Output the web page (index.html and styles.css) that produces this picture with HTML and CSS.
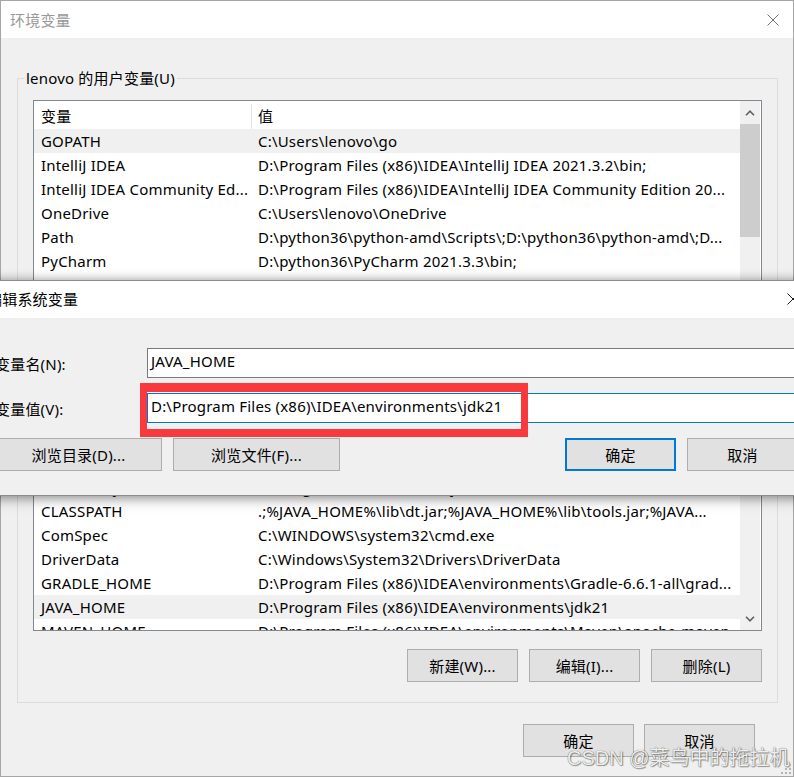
FILE: index.html
```html
<!DOCTYPE html>
<html lang="zh-CN">
<head>
    <meta charset="UTF-8">
    <meta name="viewport" content="width=device-width, initial-scale=1.0">
    <title>环境变量</title>
    <link rel="stylesheet" href="styles.css">
</head>
<body>
    <div class="window">
        <div class="titlebar">
            <span class="title">环境变量</span>
            <svg class="close" width="12" height="12" viewBox="0 0 12 12">
                <path d="M0.5 0.5L11.5 11.5M11.5 0.5L0.5 11.5" stroke="#707070" stroke-width="1" fill="none"/>
            </svg>
        </div>

        <div class="content">
            <div class="group group-user">
                <div class="legend">lenovo 的用户变量(U)</div>
                <div class="listview list-user">
                    <div class="list-main">
                        <div class="list-head">
                            <div class="cell name">变量</div>
                            <div class="cell value">值</div>
                        </div>
                        <div class="row selected">
                            <div class="cell name">GOPATH</div>
                            <div class="cell value">C:\Users\lenovo\go</div>
                        </div>
                        <div class="row">
                            <div class="cell name">IntelliJ IDEA</div>
                            <div class="cell value">D:\Program Files (x86)\IDEA\IntelliJ IDEA 2021.3.2\bin;</div>
                        </div>
                        <div class="row">
                            <div class="cell name">IntelliJ IDEA Community Ed...</div>
                            <div class="cell value">D:\Program Files (x86)\IDEA\IntelliJ IDEA Community Edition 20...</div>
                        </div>
                        <div class="row">
                            <div class="cell name">OneDrive</div>
                            <div class="cell value">C:\Users\lenovo\OneDrive</div>
                        </div>
                        <div class="row">
                            <div class="cell name">Path</div>
                            <div class="cell value">D:\python36\python-amd\Scripts\;D:\python36\python-amd\;D...</div>
                        </div>
                        <div class="row">
                            <div class="cell name">PyCharm</div>
                            <div class="cell value">D:\python36\PyCharm 2021.3.3\bin;</div>
                        </div>
                        <div class="row">
                            <div class="cell name">PyCharm Community Edition</div>
                            <div class="cell value">D:\python36\PyCharm Community Edition 2019.3\bin;</div>
                        </div>
                        <div class="row">
                            <div class="cell name">TEMP</div>
                            <div class="cell value">C:\Users\lenovo\AppData\Local\Temp</div>
                        </div>
                    </div>
                    <div class="scrollbar">
                        <div class="arrow">
                            <svg width="10" height="6" viewBox="0 0 10 6"><path d="M1 5.2L5 1.2L9 5.2" stroke="#606060" stroke-width="1.6" fill="none"/></svg>
                        </div>
                        <div class="thumb"></div>
                    </div>
                </div>
                <div class="group-buttons">
                    <button class="btn">新建(N)...</button>
                    <button class="btn">编辑(E)...</button>
                    <button class="btn">删除(D)</button>
                </div>
            </div>

            <div class="group group-system">
                <div class="legend">系统变量(S)</div>
                <div class="listview list-system">
                    <div class="list-main">
                        <div class="list-head">
                            <div class="cell name">变量</div>
                            <div class="cell value">值</div>
                        </div>
                        <div class="row">
                            <div class="cell name">ANDROID_HOME</div>
                            <div class="cell value">D:\Android\sdk</div>
                        </div>
                        <div class="row">
                            <div class="cell name">ChocolateyInstall</div>
                            <div class="cell value">C:\ProgramData\chocolatey</div>
                        </div>
                        <div class="row">
                            <div class="cell name">CLASSPATH</div>
                            <div class="cell value">.;%JAVA_HOME%\lib\dt.jar;%JAVA_HOME%\lib\tools.jar;%JAVA...</div>
                        </div>
                        <div class="row">
                            <div class="cell name">ComSpec</div>
                            <div class="cell value">C:\WINDOWS\system32\cmd.exe</div>
                        </div>
                        <div class="row">
                            <div class="cell name">DriverData</div>
                            <div class="cell value">C:\Windows\System32\Drivers\DriverData</div>
                        </div>
                        <div class="row">
                            <div class="cell name">GRADLE_HOME</div>
                            <div class="cell value">D:\Program Files (x86)\IDEA\environments\Gradle-6.6.1-all\grad...</div>
                        </div>
                        <div class="row selected">
                            <div class="cell name">JAVA_HOME</div>
                            <div class="cell value">D:\Program Files (x86)\IDEA\environments\jdk21</div>
                        </div>
                        <div class="row">
                            <div class="cell name">MAVEN_HOME</div>
                            <div class="cell value">D:\Program Files (x86)\IDEA\environments\Maven\apache-maven</div>
                        </div>
                    </div>
                    <div class="scrollbar">
                        <div class="track"></div>
                        <div class="arrow">
                            <svg width="10" height="6" viewBox="0 0 10 6"><path d="M1 0.8L5 4.8L9 0.8" stroke="#606060" stroke-width="1.6" fill="none"/></svg>
                        </div>
                    </div>
                </div>
                <div class="group-buttons">
                    <button class="btn">新建(W)...</button>
                    <button class="btn">编辑(I)...</button>
                    <button class="btn">删除(L)</button>
                </div>
            </div>

            <div class="footer">
                <button class="btn">确定</button>
                <button class="btn">取消</button>
            </div>
        </div>

        <div class="watermark">CSDN @菜鸟中的拖拉机</div>
        <svg class="grip" width="10" height="10" viewBox="0 0 10 10">
            <rect x="8" y="0" width="2" height="2" fill="#b4b4b4"/>
            <rect x="4" y="4" width="2" height="2" fill="#b4b4b4"/>
            <rect x="8" y="4" width="2" height="2" fill="#b4b4b4"/>
            <rect x="0" y="8" width="2" height="2" fill="#b4b4b4"/>
            <rect x="4" y="8" width="2" height="2" fill="#b4b4b4"/>
            <rect x="8" y="8" width="2" height="2" fill="#b4b4b4"/>
        </svg>
    </div>

    <div class="dialog">
        <div class="dlg-titlebar">
            <span class="dlg-title">编辑系统变量</span>
            <svg class="dlg-close" width="12" height="12" viewBox="0 0 12 12">
                <path d="M0.5 0.5L11.5 11.5M11.5 0.5L0.5 11.5" stroke="#1a1a1a" stroke-width="1" fill="none"/>
            </svg>
        </div>
        <div class="dlg-body">
            <div class="field">
                <label class="field-label">变量名(N):</label>
                <div class="input">JAVA_HOME</div>
            </div>
            <div class="field">
                <label class="field-label">变量值(V):</label>
                <div class="input focused">D:\Program Files (x86)\IDEA\environments\jdk21</div>
            </div>
            <div class="dlg-buttons">
                <button class="btn wide">浏览目录(D)...</button>
                <button class="btn wide">浏览文件(F)...</button>
                <span class="spacer"></span>
                <button class="btn default">确定</button>
                <button class="btn">取消</button>
            </div>
        </div>
        <div class="mark"></div>
    </div>
</body>
</html>
```

FILE: styles.css
```css
* {
    margin: 0;
    padding: 0;
    box-sizing: border-box;
}

body {
    width: 794px;
    height: 777px;
    overflow: hidden;
    position: relative;
    font-family: "Noto Sans", "Noto Sans CJK SC", sans-serif;
    font-size: 15px;
    letter-spacing: 0.2px;
    color: #000;
    background: #f0f0f0;
}

.window {
    position: relative;
    width: 794px;
    height: 777px;
    border: 1px solid #a6a6a6;
    background: #f0f0f0;
}

.titlebar {
    height: 37px;
    background: #fff;
    display: flex;
    align-items: center;
    justify-content: space-between;
    padding: 0 14px 0 9px;
}

.title {
    color: #999;
}

.content {
    padding: 0 15px 0 16px;
}

.group {
    position: relative;
    border: 1px solid #dcdcdc;
    padding: 21px 15px 20px;
}

.group-user {
    margin-top: 40px;
}

.group-system {
    margin-top: 28px;
}

.legend {
    position: absolute;
    top: -11px;
    left: 6px;
    padding: 0 2px;
    line-height: 20px;
    background: #f0f0f0;
    white-space: nowrap;
}

.listview {
    display: flex;
    background: #fff;
    border: 1px solid #828790;
    padding-right: 1px;
}

.list-user {
    height: 200px;
}

.list-system {
    height: 209px;
}

.list-main {
    flex: 1;
    overflow: hidden;
}

.list-head {
    display: flex;
    height: 28px;
    padding-top: 3px;
    line-height: 25px;
}

.list-head .name {
    border-right: 1px solid #e5e5e5;
}

.row {
    display: flex;
    height: 24px;
    line-height: 24px;
}

.row.selected {
    background: #f0f0f0;
}

.cell {
    white-space: nowrap;
    overflow: hidden;
}

.cell.name {
    width: 218px;
    flex-shrink: 0;
    padding-left: 7px;
}

.cell.value {
    flex: 1;
    padding-left: 6px;
}

.scrollbar {
    width: 20px;
    display: flex;
    flex-direction: column;
    background: #f0f0f0;
}

.scrollbar .arrow {
    height: 23px;
    flex-shrink: 0;
    display: flex;
    align-items: center;
    justify-content: center;
}

.scrollbar .thumb {
    height: 113px;
    background: #cdcdcd;
}

.scrollbar .track {
    flex: 1;
}

.group-buttons {
    display: flex;
    justify-content: flex-end;
    gap: 11px;
    margin-top: 18px;
}

.btn {
    width: 111px;
    height: 33px;
    border: 1px solid #adadad;
    background: #e1e1e1;
    font-family: inherit;
    font-size: 15px;
    letter-spacing: 0.2px;
    color: #000;
    white-space: nowrap;
}

.footer {
    display: flex;
    justify-content: flex-end;
    gap: 10px;
    margin: 21px 23px 0 0;
}

.watermark {
    position: absolute;
    left: 566px;
    top: 744px;
    font-family: "Liberation Sans", "Noto Sans CJK SC", sans-serif;
    font-size: 20px;
    line-height: 26px;
    letter-spacing: 0;
    color: rgba(255, 255, 255, 0.92);
    text-shadow: 0 0 1px rgba(0, 0, 0, 0.7), 1px 1px 1px rgba(0, 0, 0, 0.35);
    white-space: nowrap;
}

.grip {
    position: absolute;
    right: 2px;
    bottom: 2px;
}

/* edit dialog lying over the main window */
.dialog {
    position: absolute;
    left: -23px;
    top: 280px;
    width: 838px;
    height: 216px;
    border: 1px solid #8c8c8c;
    background: #f0f0f0;
    box-shadow: 0 0 10px rgba(0, 0, 0, 0.35), 0 5px 12px rgba(0, 0, 0, 0.2);
}

.dlg-titlebar {
    height: 37px;
    background: #fff;
    display: flex;
    align-items: center;
    justify-content: space-between;
    padding: 0 15px 2px 9px;
}

.dlg-body {
    padding: 30px 16px 0 17px;
}

.field {
    display: flex;
    align-items: center;
    height: 30px;
    margin-bottom: 15px;
}

.field-label {
    width: 152px;
    flex-shrink: 0;
    white-space: nowrap;
}

.input {
    flex: 1;
    height: 30px;
    line-height: 25px;
    padding-left: 3px;
    border: 1px solid #7a7a7a;
    background: #fff;
    white-space: nowrap;
}

.input.focused {
    border-color: #0078d7;
}

.dlg-buttons {
    display: flex;
    gap: 11px;
    margin-top: 6px;
}

.btn.wide {
    width: 167px;
}

.btn.default {
    border: 2px solid #0078d7;
}

.spacer {
    flex: 1;
}

.mark {
    position: absolute;
    left: 162px;
    top: 102px;
    width: 388px;
    height: 54px;
    border-style: solid;
    border-color: #f93a3c;
    border-width: 9px 7px 8px 7px;
}
```
